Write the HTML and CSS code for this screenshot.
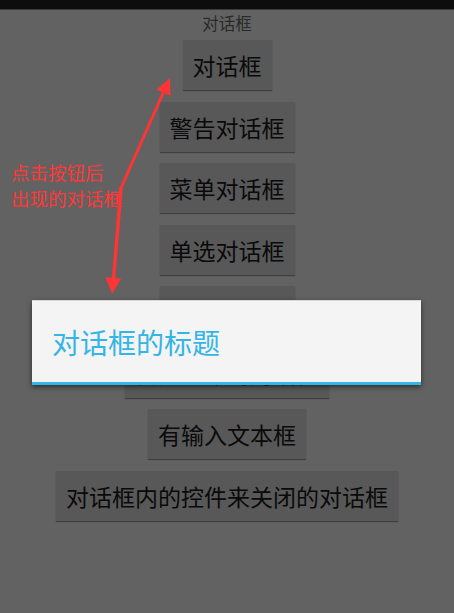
FILE: index.html
```html
<!DOCTYPE html>
<html lang="zh">
<head>
<meta charset="utf-8">
<title>对话框</title>
<link rel="stylesheet" href="styles.css">
</head>
<body>
<div class="screen">
  <div class="status-bar"></div>
  <div class="app">
    <div class="app-title">对话框</div>
    <div class="buttons">
      <div class="btn">对话框</div>
      <div class="btn">警告对话框</div>
      <div class="btn">菜单对话框</div>
      <div class="btn">单选对话框</div>
      <div class="btn">多选对话框</div>
      <div class="btn">自定义布局对话框</div>
      <div class="btn">有输入文本框</div>
      <div class="btn">对话框内的控件来关闭的对话框</div>
    </div>
  </div>

  <div class="note">点击按钮后<br>出现的对话框</div>

  <svg class="arrows" width="454" height="613" viewBox="0 0 454 613" xmlns="http://www.w3.org/2000/svg">
    <line x1="121" y1="188" x2="164" y2="91" stroke="#ff3434" stroke-width="3" stroke-linecap="round"/>
    <polygon points="170,78 156.5,89.5 170.5,95.8" fill="#ff3434"/>
    <line x1="121" y1="188" x2="113.5" y2="280" stroke="#ff3434" stroke-width="3.5" stroke-linecap="round"/>
    <polygon points="112,294 105.5,277.3 121.2,278.6" fill="#ff3434"/>
  </svg>

  <div class="dialog">
    <div class="dialog-title">对话框的标题</div>
  </div>
</div>
</body>
</html>
```

FILE: styles.css
```css
html, body {
  margin: 0;
  padding: 0;
}

body {
  background: #626262;
  font-family: "Noto Sans CJK SC", "Noto Sans", sans-serif;
}

.screen {
  position: relative;
  width: 454px;
  height: 613px;
  overflow: hidden;
  background: #626262;
}

.status-bar {
  height: 10px;
  background: #0d0d0d;
  border-bottom: 1px solid #3a3a3a;
  box-sizing: border-box;
}

.app {
  display: flex;
  flex-direction: column;
  align-items: center;
}

.app-title {
  margin-top: 3px;
  font-size: 16.5px;
  line-height: 20px;
  color: #2a2a2a;
}

.buttons {
  margin-top: 7px;
  display: flex;
  flex-direction: column;
  align-items: center;
  gap: 11.5px;
}

.btn {
  height: 50px;
  box-sizing: border-box;
  padding: 1px 10px 0;
  display: flex;
  align-items: center;
  justify-content: center;
  background: #585858;
  color: #0a0a0a;
  font-size: 23px;
  line-height: 1;
  white-space: nowrap;
  box-shadow: 0 1px 1px rgba(0, 0, 0, 0.35);
}

.note {
  position: absolute;
  left: 11px;
  top: 159px;
  font-size: 18.5px;
  line-height: 26px;
  color: #ff3838;
}

.arrows {
  position: absolute;
  left: 0;
  top: 0;
}

.dialog {
  position: absolute;
  left: 32px;
  top: 300px;
  width: 389px;
  height: 85px;
  box-sizing: border-box;
  background: #f4f4f4;
  border-top: 1px solid #d8d8d8;
  border-bottom: 3px solid #33b5e5;
  box-shadow: 0 2px 5px rgba(0, 0, 0, 0.55);
  display: flex;
  align-items: center;
  padding-left: 20px;
}

.dialog-title {
  font-size: 28px;
  line-height: 1;
  color: #33b5e5;
  white-space: nowrap;
}
```
